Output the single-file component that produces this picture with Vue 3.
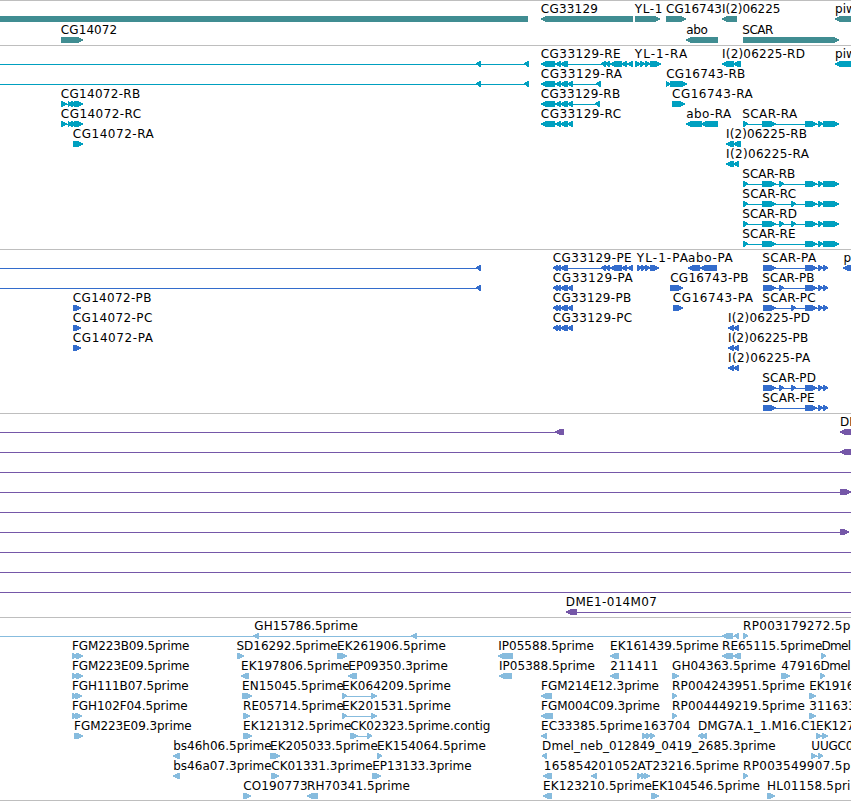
<template>
  <div class="browser">
    <section v-for="track in tracks" :key="track.name" class="track" :class="track.name">
      <svg class="canvas" :height="track.height" :viewBox="`0 0 851 ${track.height}`">
        <g v-for="(f, i) in track.features" :key="i">
          <rect
            v-if="f.exons.length > 1 || f.line"
            class="shape"
            :x="start(f)"
            :y="f.row * track.pitch + 18"
            :width="end(f) - start(f)"
            height="1"
          />
          <polygon
            v-for="(e, n) in f.exons"
            :key="n"
            class="shape"
            :points="arrow(e, f.dir, f.row * track.pitch + 15)"
          />
        </g>
        <template v-for="(f, i) in track.features" :key="'t' + i">
          <text
            v-if="f.label"
            class="label"
            :x="f.from - 0.5"
            :y="f.row * track.pitch + 12"
            :textLength="f.to - f.from + 0.9"
          >{{ f.label }}</text>
        </template>
      </svg>
    </section>
  </div>
</template>

<script setup>
// dir: 1 forward, -1 reverse, 0 plain bar
const feat = (row, dir, exons, label, from, to, line) => ({ row, dir, exons, label, from, to, line })

const start = (f) => (f.line ? f.line[0] : f.exons[0][0])
const end = (f) => (f.line ? f.line[1] : f.exons[f.exons.length - 1][1])

function arrow([a, b], dir, y) {
  if (dir === 0) {
    return `${a},${y} ${b},${y} ${b},${y + 6} ${a},${y + 6}`
  }
  const head = Math.min(b - a, 6)
  const tip = dir > 0 ? b : a
  const tail = dir > 0 ? a : b
  const neck = tip - dir * head * 0.85
  const mid = tip - dir * head * 0.4
  return `${tail},${y} ${neck},${y} ${mid},${y + 1.2} ${tip},${y + 2.4} ${tip},${y + 3.6} ${mid},${y + 4.8} ${neck},${y + 6} ${tail},${y + 6}`
}

const genes = [
  feat(0, 0, [[0, 528]]),
  feat(0, -1, [[541, 633]], 'CG33129', 541.3, 597.5),
  feat(0, 1, [[635, 660]], 'YL-1', 635.3, 662),
  feat(0, 1, [[666, 686]], 'CG16743', 666.6, 721.5),
  feat(0, -1, [[722, 737]], 'I(2)06225', 722.5, 780),
  feat(0, -1, [[835, 870]], 'piw', 835.5, 855.5),
  feat(1, 1, [[61, 83]], 'CG14072', 61.3, 116.8),
  feat(1, -1, [[686, 718]], 'abo', 686.7, 707.5),
  feat(1, 1, [[743, 839]], 'SCAR', 742.8, 773)
]

const cgTail = [[541, 555], [555, 561], [560, 568]]
const cgHead = [[601, 606], [605, 610], [610, 622], [621, 627], [627, 633]]
const rna14072 = [[61, 67], [68, 72], [71, 76], [74, 83]]
const scarEnd = [[805, 817], [818, 823], [823, 839]]
const transcripts = [
  feat(0, -1, [[476, 481], [524, 529]], '', 0, 0, [0, 529]),
  feat(1, -1, [[476, 481], [524, 529]], '', 0, 0, [0, 529]),
  feat(0, -1, [...cgTail, ...cgHead], 'CG33129-RE', 541.3, 620.3),
  feat(0, 1, [[635, 641], [640, 645], [645, 650], [650, 661]], 'YL-1-RA', 635.3, 686.7),
  feat(0, -1, [[722, 734], [733, 741]], 'I(2)06225-RD', 722.5, 804.5),
  feat(0, -1, [[835, 870]], 'piw', 835.5, 855.5),
  feat(1, -1, [...cgTail, [567, 573], [596, 601]], 'CG33129-RA', 541.3, 621.6),
  feat(1, 1, [[666, 670], [670, 687]], 'CG16743-RB', 666.7, 744.8),
  feat(2, 1, rna14072, 'CG14072-RB', 61.3, 139.8),
  feat(2, -1, [...cgTail, [567, 573], [595, 600]], 'CG33129-RB', 541.3, 619.8),
  feat(2, 1, [[672, 685]], 'CG16743-RA', 672.5, 752.4),
  feat(3, 1, rna14072, 'CG14072-RC', 61.3, 140.8),
  feat(3, -1, [...cgTail, [567, 573]], 'CG33129-RC', 541.3, 620.8),
  feat(3, -1, [[686, 702], [701, 718]], 'abo-RA', 686.7, 730.8),
  feat(3, 1, [[743, 748], [762, 776], ...scarEnd], 'SCAR-RA', 742.8, 796.8),
  feat(4, 1, [[73, 83]], 'CG14072-RA', 73.3, 153.4),
  feat(4, -1, [[726, 734], [733, 741]], 'I(2)06225-RB', 726.5, 806.5),
  feat(5, -1, [[726, 734], [733, 739]], 'I(2)06225-RA', 726.5, 808.5),
  feat(6, 1, [[743, 748], [762, 776], [779, 784], ...scarEnd], 'SCAR-RB', 742.8, 794.8),
  feat(7, 1, [[743, 748], [762, 776], [791, 796], ...scarEnd], 'SCAR-RC', 742.8, 795.8),
  feat(8, 1, [[743, 748], [762, 776], [779, 784], [791, 796], ...scarEnd], 'SCAR-RD', 742.8, 796.6),
  feat(9, 1, [[743, 748], [762, 776], ...scarEnd], 'SCAR-RE', 742.8, 795.3)
]

const cdsTail = [[553, 558], [556, 561], [560, 568]]
const cdsScar = [[805, 817], [818, 823], [823, 828]]
const proteins = [
  feat(0, -1, [[476, 481]], '', 0, 0, [0, 481]),
  feat(1, -1, [[476, 481]], '', 0, 0, [0, 481]),
  feat(0, -1, [...cdsTail, ...cgHead], 'CG33129-PE', 553.3, 631.3),
  feat(0, 1, [[637, 642], [641, 646], [645, 650], [650, 659]], 'YL-1-PA', 637.3, 687.6),
  feat(0, -1, [[688, 700], [700, 717]], 'abo-PA', 688.5, 732.4),
  feat(0, 1, [[763, 776], ...cdsScar], 'SCAR-PA', 762.8, 815.7),
  feat(0, -1, [[843, 870]], 'p', 844, 851),
  feat(1, -1, [...cdsTail, [567, 573]], 'CG33129-PA', 553.3, 632.4),
  feat(1, 1, [[670, 683]], 'CG16743-PB', 670.7, 748),
  feat(1, 1, [[763, 776], [779, 784], ...cdsScar], 'SCAR-PB', 762.8, 814),
  feat(2, 1, [[73, 81]], 'CG14072-PB', 73.3, 151),
  feat(2, -1, [...cdsTail, [567, 573]], 'CG33129-PB', 553.3, 630.8),
  feat(2, 1, [[673, 683]], 'CG16743-PA', 673.3, 752.5),
  feat(2, 1, [[763, 776], [791, 796], ...cdsScar], 'SCAR-PC', 762.8, 815.2),
  feat(3, 1, [[73, 81]], 'CG14072-PC', 73.3, 152),
  feat(3, -1, [...cdsTail, [567, 573]], 'CG33129-PC', 553.3, 631.8),
  feat(3, -1, [[728, 734], [733, 739]], 'I(2)06225-PD', 728.5, 809.7),
  feat(4, 1, [[73, 81]], 'CG14072-PA', 73.3, 152.6),
  feat(4, -1, [[728, 734], [733, 739]], 'I(2)06225-PB', 728.5, 807.8),
  feat(5, -1, [[728, 734], [733, 739]], 'I(2)06225-PA', 728.5, 809.7),
  feat(6, 1, [[763, 776], [779, 784], [791, 796], ...cdsScar], 'SCAR-PD', 762.8, 815.6),
  feat(7, 1, [[763, 776], ...cdsScar], 'SCAR-PE', 762.8, 814.3)
]

const clones = [
  feat(0, -1, [[555, 564]], '', 0, 0, [0, 564]),
  feat(0, -1, [[840, 870]], 'DM', 840.5, 859.2),
  feat(1, -1, [[840, 870]], '', 0, 0, [0, 851]),
  feat(3, 1, [[840, 851]], '', 0, 0, [0, 851]),
  feat(5, 1, [[840, 849]], '', 0, 0, [0, 849]),
  ...[2, 4, 6, 7, 8].map((row) => feat(row, 0, [], '', 0, 0, [0, 851])),
  feat(9, -1, [[566, 577]], 'DME1-014M07', 566.3, 656.5, [566, 851])
]

const ests = [
  feat(0, -1, [[253, 259], [411, 417], [722, 733], [734, 739]], '', 0, 0, [0, 737]),
  feat(0, 0, [], 'GH15786.5prime', 254.8, 357.5),
  feat(0, 1, [[743, 748]], 'RP003179272.5p', 743.5, 850),
  feat(1, 1, [[72, 78], [76, 83]], 'FGM223B09.5prime', 72.5, 189),
  feat(1, 1, [[237, 244]], 'SD16292.5prime', 237, 337.3),
  feat(1, 1, [[337, 347]], 'EK261906.5prime', 337.6, 445.5),
  feat(1, -1, [[498, 513]], 'IP05588.5prime', 498.7, 593.5),
  feat(1, -1, [[610, 619]], 'EK161439.5prime', 610.6, 718.3),
  feat(1, -1, [[722, 733], [733, 741]], 'RE65115.5prime', 722.6, 822),
  feat(1, 1, [[821, 826]], 'Dmel', 822, 850.7),
  feat(2, 1, [[72, 78], [76, 83]], 'FGM223E09.5prime', 72.5, 189),
  feat(2, -1, [[241, 249]], 'EK197806.5prime', 241.6, 349.3),
  feat(2, -1, [[348, 357]], 'EP09350.3prime', 348.8, 447.5),
  feat(2, -1, [[499, 512]], 'IP05388.5prime', 499.4, 594.5),
  feat(2, -1, [[610, 619]], '211411', 610.7, 658),
  feat(2, 1, [[672, 679]], 'GH04363.5prime', 672.6, 775.5),
  feat(2, 1, [[781, 790]], '47916', 781.8, 820.3),
  feat(2, 1, [[820, 825]], 'Dmel', 821, 850.2),
  feat(3, 1, [[72, 77], [75, 82]], 'FGH111B07.5prime', 72.5, 188.3),
  feat(3, 1, [[242, 252]], 'EN15045.5prime', 242.6, 343.5),
  feat(3, 1, [[342, 347], [371, 377]], 'EK064209.5prime', 342.6, 450.5),
  feat(3, -1, [[541, 552]], 'FGM214E12.3prime', 541.6, 658.5),
  feat(3, 1, [[672, 677]], 'RP004243951.5prime', 672.6, 804.5),
  feat(3, 1, [[809, 816]], 'EK1916', 809.7, 854),
  feat(4, 1, [[72, 77], [75, 82]], 'FGH102F04.5prime', 72.5, 187.3),
  feat(4, 1, [[243, 250]], 'RE05714.5prime', 243.6, 343.5),
  feat(4, 1, [[342, 347], [371, 377]], 'EK201531.5prime', 342.6, 450.5),
  feat(4, -1, [[541, 553]], 'FGM004C09.3prime', 541.6, 659.5),
  feat(4, 1, [[672, 677]], 'RP004449219.5prime', 672.6, 804.5),
  feat(4, 1, [[809, 816]], '311633', 809.7, 855.5),
  feat(5, 1, [[74, 83]], 'FGM223E09.3prime', 74.6, 191.3),
  feat(5, 1, [[243, 252]], 'EK121312.5prime', 243.6, 351),
  feat(5, 1, [[350, 358], [367, 372]], 'CK02323.5prime.contig', 350.8, 490),
  feat(5, -1, [[541, 547]], 'EC33385.5prime', 541.6, 642),
  feat(5, 1, [[642, 648], [646, 651], [650, 655]], '163704', 643.7, 690),
  feat(5, -1, [[698, 703], [701, 707]], 'DMG7A.1_1.M16.C1', 698.6, 816.5),
  feat(5, 1, [[816, 822], [822, 828]], 'EK127', 816.6, 854),
  feat(6, -1, [[173, 180]], 'bs46h06.5prime', 173.7, 271.3),
  feat(6, 1, [[270, 280]], 'EK205033.5prime', 270.6, 377.5),
  feat(6, 1, [[377, 382]], 'EK154064.5prime', 377.6, 485.5),
  feat(6, -1, [[542, 547]], 'Dmel_neb_012849_0419_2685.3prime', 542.6, 775.3),
  feat(6, 1, [[811, 817], [818, 823]], 'UUGC0', 811.8, 853),
  feat(7, -1, [[173, 180]], 'bs46a07.3prime', 173.7, 271.3),
  feat(7, 1, [[271, 279]], 'CK01331.3prime', 271.7, 372.3),
  feat(7, 1, [[372, 381]], 'EP13133.3prime', 372.7, 471.3),
  feat(7, -1, [[543, 552]], '165854', 544.2, 591),
  feat(7, -1, [[591, 597]], '201052', 591.2, 637.5),
  feat(7, 1, [[637, 642], [641, 646], [644, 650]], 'AT23216.5prime', 638, 738.5),
  feat(7, 1, [[743, 748]], 'RP003549907.5p', 743.5, 850),
  feat(8, 1, [[243, 251]], 'CO190773', 243.7, 307.3),
  feat(8, -1, [[307, 318]], 'RH70341.5prime', 307.6, 409.5),
  feat(8, -1, [[543, 552]], 'EK123210.5prime', 543.6, 651.5),
  feat(8, 1, [[651, 659]], 'EK104546.5prime', 652, 759.5),
  feat(8, 1, [[767, 775]], 'HL01158.5pri', 767.6, 850)
]

const tracks = [
  { name: 'gene', height: 44, pitch: 21, features: genes },
  { name: 'transcript', height: 203, pitch: 20, features: transcripts },
  { name: 'protein', height: 163, pitch: 20, features: proteins },
  { name: 'clone', height: 203, pitch: 20, features: clones },
  { name: 'est', height: 182, pitch: 20, features: ests }
]
</script>

<style>
body {
  background: #fff;
}
</style>

<style scoped>
.browser {
  width: 851px;
  overflow: hidden;
  border-bottom: 1px solid #bebebe;
}

.track {
  border-top: 1px solid #bebebe;
}

.canvas {
  display: block;
  width: 851px;
}

.shape {
  shape-rendering: crispEdges;
  fill: currentColor;
}

.label {
  font-family: "DejaVu Sans", sans-serif;
  font-size: 12px;
  fill: #000;
}

.gene {
  color: #408d92;
}

.transcript {
  color: #00a0c0;
}

.protein {
  color: #336ccc;
}

.clone {
  color: #7557a8;
}

.est {
  color: #87bcde;
}
</style>
